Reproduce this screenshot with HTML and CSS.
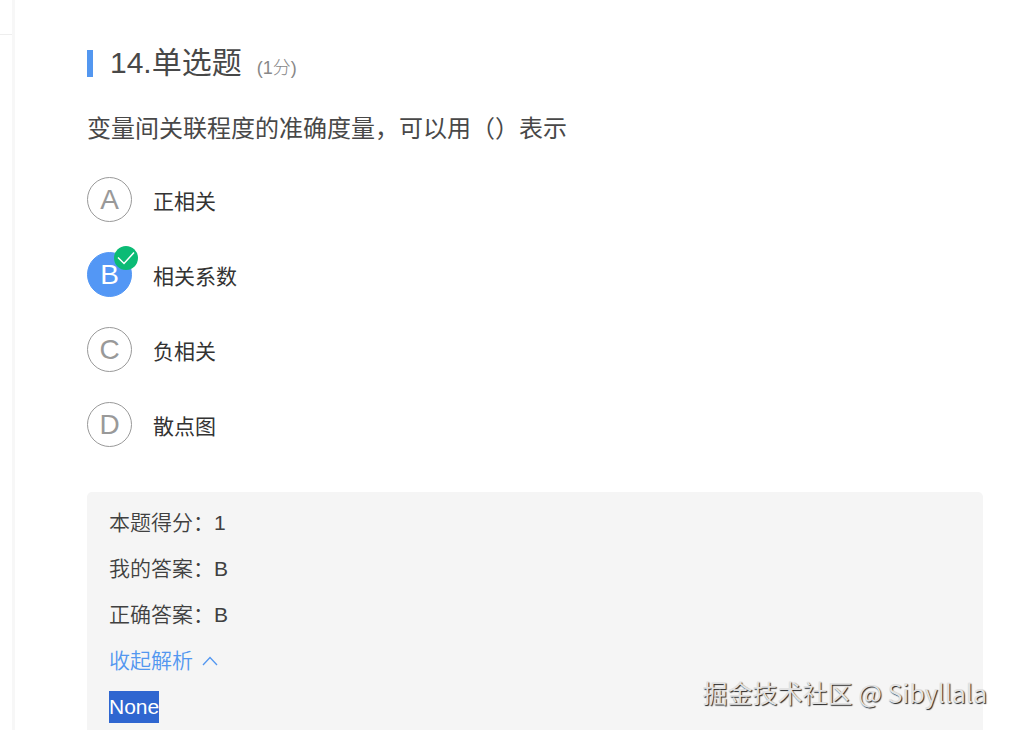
FILE: index.html
```html
<!DOCTYPE html>
<html lang="zh-CN">
<head>
<meta charset="utf-8">
<title>单选题</title>
<link rel="stylesheet" href="styles.css">
</head>
<body>
<div class="page">
  <aside class="rail"><div class="rail-head"></div></aside>
  <main class="question">
    <header class="heading">
      <h1 class="title">14.单选题</h1>
      <span class="points">(1分)</span>
    </header>
    <p class="stem">变量间关联程度的准确度量，可以用（）表示</p>
    <ul class="options">
      <li><button class="option" type="button"><span class="mark">A</span><span class="label">正相关</span></button></li>
      <li><button class="option selected" type="button"><span class="mark">B<svg class="tick" viewBox="0 0 24 24" aria-hidden="true"><circle cx="12" cy="12" r="12"/><path d="M4 11.500 10 17.500 20 6.500"/></svg></span><span class="label">相关系数</span></button></li>
      <li><button class="option" type="button"><span class="mark">C</span><span class="label">负相关</span></button></li>
      <li><button class="option" type="button"><span class="mark">D</span><span class="label">散点图</span></button></li>
    </ul>
    <section class="result">
      <p class="row">本题得分：1</p>
      <p class="row">我的答案：B</p>
      <p class="row">正确答案：B</p>
      <p class="row"><a class="toggle" href="#analysis">收起解析<svg class="chevron" viewBox="0 0 16 10" aria-hidden="true"><path d="M1 9 8 1.500 15 9"/></svg></a></p>
      <p class="row" id="analysis"><span class="highlight">None</span></p>
    </section>
  </main>
  <div class="watermark">掘金技术社区 @ Sibyllala</div>
</div>
</body>
</html>
```
FILE: styles.css
```css
* { box-sizing: border-box; }
body {
  margin: 0;
  background: #fff;
  color: #484848;
  font-family: "Liberation Sans", "Noto Sans CJK SC", sans-serif;
}
h1, p, ul { margin: 0; padding: 0; font-weight: 400; }
.page {
  position: relative;
  display: flex;
  height: 100vh;
  overflow: hidden;
}
.rail {
  flex: none;
  width: 15px;
  border-right: 3px solid #f7f7f7;
}
.rail-head { height: 35px; border-bottom: 1px solid #eee; }
.question { flex: 1; padding: 39px 26px 0 72px; }
.heading {
  display: flex;
  align-items: center;
  gap: 15px;
}
.title {
  display: flex;
  align-items: center;
  font-size: 30px;
  line-height: 48px;
}
.title::before {
  content: "";
  width: 6px;
  height: 27px;
  margin-right: 17px;
  background: #5397f0;
}
.points {
  padding-top: 10px;
  color: #888;
  font-size: 18px;
  font-weight: 300;
  line-height: 24px;
}
.stem { margin-top: 24px; font-size: 24px; line-height: 36px; }
.options {
  display: grid;
  gap: 30px;
  margin-top: 30px;
  list-style: none;
}
.option {
  display: flex;
  align-items: center;
  gap: 21px;
  padding: 0;
  border: 0;
  background: none;
  color: #333;
  font: inherit;
  font-size: 21px;
  cursor: pointer;
}
.mark {
  position: relative;
  display: flex;
  justify-content: center;
  width: 45px;
  height: 45px;
  border: 1px solid #999;
  border-radius: 50%;
  color: #999;
  font-size: 28px;
  line-height: 43px;
}
.selected .mark { border-color: #5397f5; background: #5397f5; color: #fff; }
.tick {
  position: absolute;
  top: -7px;
  right: -7px;
  width: 24px;
  height: 24px;
}
.tick circle { fill: #0bbb75; }
.tick path { fill: none; stroke: #fff; stroke-width: 1.5; }
.result {
  margin-top: 45px;
  padding: 8px 22px;
  border-radius: 5px;
  background: #f5f5f5;
  font-size: 21px;
}
.row {
  color: #404040;
  font-weight: 350;
  line-height: 46px;
}
.toggle {
  display: inline-flex;
  align-items: center;
  gap: 9px;
  color: #5397f0;
  text-decoration: none;
}
.chevron { width: 16px; height: 10px; }
.chevron path { fill: none; stroke: #5397f0; stroke-width: 1.3; }
.highlight {
  display: inline-block;
  background: #2f66d0;
  color: #fff;
  line-height: 32px;
}
.watermark {
  position: absolute;
  right: 22px;
  bottom: 20px;
  color: #e2e2e2;
  font-family: "Noto Sans CJK SC", sans-serif;
  font-size: 25px;
  line-height: 36px;
  text-shadow: 1px 1px 1px #222;
}
```
